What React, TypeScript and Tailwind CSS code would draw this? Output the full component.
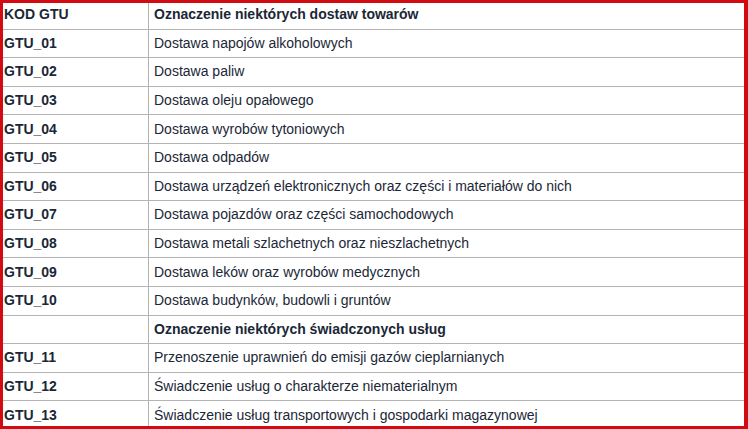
import React from "react";

const rows: { code: string; text: string; bold?: boolean }[] = [
  { code: "KOD GTU", text: "Oznaczenie niektórych dostaw towarów", bold: true },
  { code: "GTU_01", text: "Dostawa napojów alkoholowych" },
  { code: "GTU_02", text: "Dostawa paliw" },
  { code: "GTU_03", text: "Dostawa oleju opałowego" },
  { code: "GTU_04", text: "Dostawa wyrobów tytoniowych" },
  { code: "GTU_05", text: "Dostawa odpadów" },
  { code: "GTU_06", text: "Dostawa urządzeń elektronicznych oraz części i materiałów do nich" },
  { code: "GTU_07", text: "Dostawa pojazdów oraz części samochodowych" },
  { code: "GTU_08", text: "Dostawa metali szlachetnych oraz nieszlachetnych" },
  { code: "GTU_09", text: "Dostawa leków oraz wyrobów medycznych" },
  { code: "GTU_10", text: "Dostawa budynków, budowli i gruntów" },
  { code: "", text: "Oznaczenie niektórych świadczonych usług", bold: true },
  { code: "GTU_11", text: "Przenoszenie uprawnień do emisji gazów cieplarnianych" },
  { code: "GTU_12", text: "Świadczenie usług o charakterze niematerialnym" },
  { code: "GTU_13", text: "Świadczenie usług transportowych i gospodarki magazynowej" },
];

export default function App() {
  return (
    <div
      className="relative w-[748px] h-[429px] overflow-hidden bg-white text-[14px] text-[#1b2736]"
      style={{ fontFamily: '"Liberation Sans", Arial, sans-serif' }}
    >
      <div className="flex flex-col pt-[1px]">
        {rows.map((r, i) => (
          <div key={i} className="flex h-[28.6px] shrink-0 border-b border-[#b4b4b4]">
            <div className="w-[149px] shrink-0 border-r border-[#b4b4b4] pl-[4px] flex items-center font-bold">
              {r.code}
            </div>
            <div className={`pl-[5px] flex items-center ${r.bold ? "font-bold" : ""}`}>{r.text}</div>
          </div>
        ))}
      </div>
      <div className="absolute inset-0 border-[3px] border-r-[4px] border-[#d20b12] pointer-events-none" />
    </div>
  );
}
